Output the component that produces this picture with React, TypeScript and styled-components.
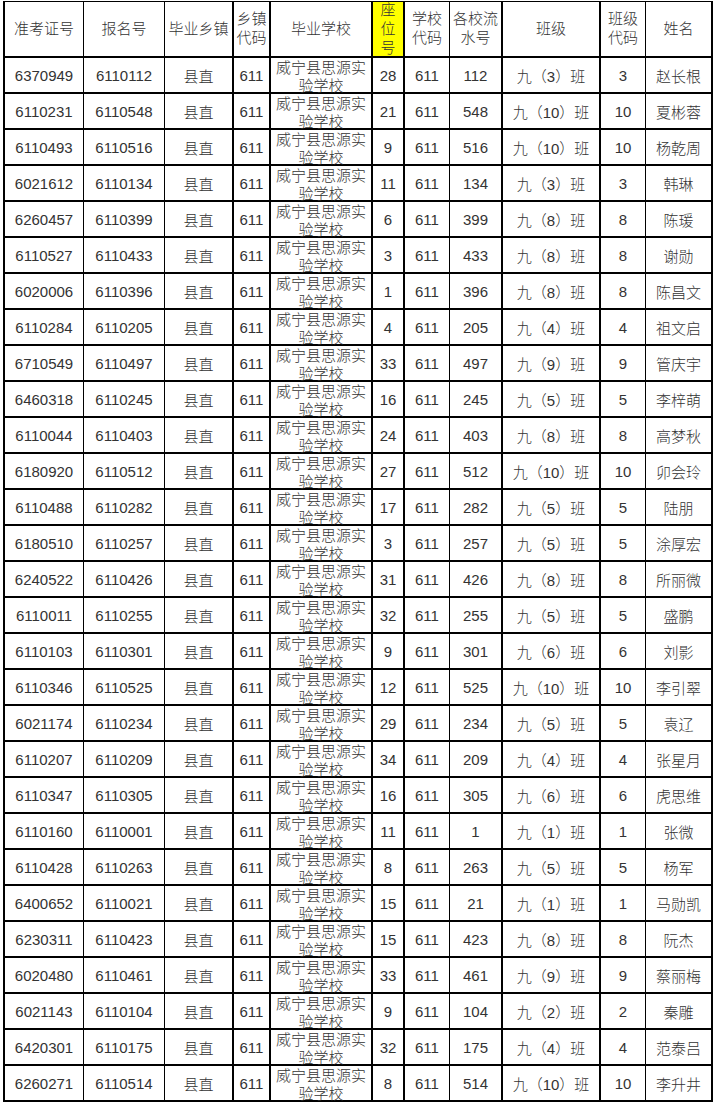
import React from "react";
import styled, { createGlobalStyle } from "styled-components";

const Global = createGlobalStyle`
  html, body { margin: 0; padding: 0; background: #fff; }
  body { font-family: "Liberation Sans", "Noto Sans CJK SC", sans-serif; }
`;

const Page = styled.div`
  padding: 1px 0 0 3px;
`;

const COLS = [79, 81, 69, 37, 102, 32, 45, 53, 98, 45, 67];
const RIGHT = [1, 1, 2, 2, 2, 2, 1, 2, 2, 1, 2];

const Grid = styled.div`
  display: grid;
  grid-template-columns: ${COLS.map((c) => c + "px").join(" ")};
  grid-template-rows: 56px repeat(29, 36px);
  width: max-content;
  border-left: 2px solid #000;
  border-top: 1px solid #000;
`;

const Cell = styled.div<{ $right: number; $hl?: boolean }>`
  box-sizing: border-box;
  border-right: ${(p) => p.$right}px solid #000;
  border-bottom: 2px solid #000;
  background: ${(p) => (p.$hl ? "#ffff00" : "#fff")};
  color: #333;
  font-size: 15px;
  font-weight: 300;
  display: flex;
  align-items: center;
  justify-content: center;
  text-align: center;
  overflow: hidden;
  white-space: nowrap;
`;

const HeadCell = styled(Cell)`
  white-space: normal;
  line-height: 19px;
  padding-bottom: 2px;
`;

const SchoolCell = styled(Cell)`
  align-items: flex-start;
  white-space: normal;
  line-height: 18px;
  padding-top: 1px;
  overflow: visible;
  background: transparent;
`;

const headers: React.ReactNode[] = [
  "准考证号",
  "报名号",
  "毕业乡镇",
  <>乡镇<br />代码</>,
  "毕业学校",
  <>座<br />位<br />号</>,
  <>学校<br />代码</>,
  <>各校流<br />水号</>,
  "班级",
  <>班级<br />代码</>,
  "姓名",
];

const rows: [string, string, string, string, string, string, string][] = [
  ["6370949", "6110112", "28", "112", "九（3）班", "3", "赵长根"],
  ["6110231", "6110548", "21", "548", "九（10）班", "10", "夏彬蓉"],
  ["6110493", "6110516", "9", "516", "九（10）班", "10", "杨乾周"],
  ["6021612", "6110134", "11", "134", "九（3）班", "3", "韩琳"],
  ["6260457", "6110399", "6", "399", "九（8）班", "8", "陈瑗"],
  ["6110527", "6110433", "3", "433", "九（8）班", "8", "谢勋"],
  ["6020006", "6110396", "1", "396", "九（8）班", "8", "陈昌文"],
  ["6110284", "6110205", "4", "205", "九（4）班", "4", "祖文启"],
  ["6710549", "6110497", "33", "497", "九（9）班", "9", "管庆宇"],
  ["6460318", "6110245", "16", "245", "九（5）班", "5", "李梓萌"],
  ["6110044", "6110403", "24", "403", "九（8）班", "8", "高梦秋"],
  ["6180920", "6110512", "27", "512", "九（10）班", "10", "卯会玲"],
  ["6110488", "6110282", "17", "282", "九（5）班", "5", "陆朋"],
  ["6180510", "6110257", "3", "257", "九（5）班", "5", "涂厚宏"],
  ["6240522", "6110426", "31", "426", "九（8）班", "8", "所丽微"],
  ["6110011", "6110255", "32", "255", "九（5）班", "5", "盛鹏"],
  ["6110103", "6110301", "9", "301", "九（6）班", "6", "刘影"],
  ["6110346", "6110525", "12", "525", "九（10）班", "10", "李引翠"],
  ["6021174", "6110234", "29", "234", "九（5）班", "5", "袁辽"],
  ["6110207", "6110209", "34", "209", "九（4）班", "4", "张星月"],
  ["6110347", "6110305", "16", "305", "九（6）班", "6", "虎思维"],
  ["6110160", "6110001", "11", "1", "九（1）班", "1", "张微"],
  ["6110428", "6110263", "8", "263", "九（5）班", "5", "杨军"],
  ["6400652", "6110021", "15", "21", "九（1）班", "1", "马勋凯"],
  ["6230311", "6110423", "15", "423", "九（8）班", "8", "阮杰"],
  ["6020480", "6110461", "33", "461", "九（9）班", "9", "蔡丽梅"],
  ["6021143", "6110104", "9", "104", "九（2）班", "2", "秦雕"],
  ["6420301", "6110175", "32", "175", "九（4）班", "4", "范泰吕"],
  ["6260271", "6110514", "8", "514", "九（10）班", "10", "李升井"],
];

export default function App() {
  return (
    <>
      <Global />
      <Page>
        <Grid>
          {headers.map((h, i) => (
            <HeadCell key={"h" + i} $right={RIGHT[i]} $hl={i === 5}>
              <span>{h}</span>
            </HeadCell>
          ))}
          {rows.map((r, ri) => {
            const vals = [r[0], r[1], "县直", "611", "威宁县思源实验学校", r[2], "611", r[3], r[4], r[5], r[6]];
            return vals.map((v, ci) =>
              ci === 4 ? (
                <SchoolCell key={ri + "-" + ci} $right={RIGHT[ci]}>
                  {v}
                </SchoolCell>
              ) : (
                <Cell key={ri + "-" + ci} $right={RIGHT[ci]}>
                  {v}
                </Cell>
              )
            );
          })}
        </Grid>
      </Page>
    </>
  );
}
